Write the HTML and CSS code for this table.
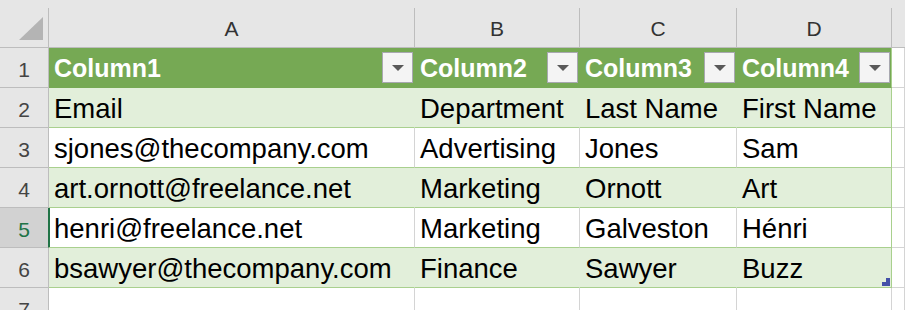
FILE: index.html
```
<!DOCTYPE html>
<html>
<head>
<meta charset="utf-8">
<link rel="stylesheet" href="styles.css">
</head>
<body>
<div class="top"></div>
<div class="sheet">
  <div class="corner"><svg width="24" height="23" viewBox="0 0 24 23"><polygon points="24,0 24,23 0,23" fill="#b4b4b4"/></svg></div>
  <div class="ch">A</div><div class="ch">B</div><div class="ch">C</div><div class="ch">D</div><div class="ch last"></div>

  <div class="rh">1</div>
  <div class="th"><span class="t">Column1</span><span class="dd"><svg width="12" height="6" viewBox="0 0 12 6"><polygon points="0,0 12,0 6,6" fill="#595959"/></svg></span></div>
  <div class="th"><span class="t">Column2</span><span class="dd"><svg width="12" height="6" viewBox="0 0 12 6"><polygon points="0,0 12,0 6,6" fill="#595959"/></svg></span></div>
  <div class="th"><span class="t">Column3</span><span class="dd"><svg width="12" height="6" viewBox="0 0 12 6"><polygon points="0,0 12,0 6,6" fill="#595959"/></svg></span></div>
  <div class="th end"><span class="t">Column4</span><span class="dd"><svg width="12" height="6" viewBox="0 0 12 6"><polygon points="0,0 12,0 6,6" fill="#595959"/></svg></span></div>
  <div class="out"></div>

  <div class="rh">2</div>
  <div class="c band">Email</div><div class="c band">Department</div><div class="c band">Last Name</div><div class="c band end">First Name</div><div class="out"></div>

  <div class="rh">3</div>
  <div class="c plain">sjones@thecompany.com</div><div class="c plain">Advertising</div><div class="c plain">Jones</div><div class="c plain end">Sam</div><div class="out"></div>

  <div class="rh">4</div>
  <div class="c band">art.ornott@freelance.net</div><div class="c band">Marketing</div><div class="c band">Ornott</div><div class="c band end">Art</div><div class="out"></div>

  <div class="rh active">5</div>
  <div class="c plain sel">henri@freelance.net</div><div class="c plain">Marketing</div><div class="c plain">Galveston</div><div class="c plain end">Hénri</div><div class="out"></div>

  <div class="rh">6</div>
  <div class="c band">bsawyer@thecompany.com</div><div class="c band">Finance</div><div class="c band">Sawyer</div><div class="c band end handle-cell">Buzz<svg class="handle" width="8" height="8" viewBox="0 0 8 8"><polygon points="4,0 8,0 8,8 0,8 0,4 4,4" fill="#4451a8"/></svg></div><div class="out"></div>

  <div class="rh">7</div>
  <div class="out"></div><div class="out"></div><div class="out"></div><div class="out"></div><div class="out"></div>
</div>
</body>
</html>
```
FILE: styles.css
```
html, body {
  margin: 0;
  padding: 0;
  background: #ffffff;
  overflow: hidden;
}
body {
  font-family: "Liberation Sans", Arial, sans-serif;
}
.top {
  height: 8px;
  background: #e6e6e6;
}
.sheet {
  display: grid;
  grid-template-columns: 49px 366px 165px 157px 155px 1fr;
  grid-auto-rows: 40px;
}
.sheet > div {
  box-sizing: border-box;
  border-right: 1px solid #d4d4d4;
  border-bottom: 1px solid #d4d4d4;
  min-width: 0;
  overflow: hidden;
  white-space: nowrap;
}
.corner {
  background: #e6e6e6;
  border-color: #bdbdbd !important;
  display: flex;
  justify-content: flex-end;
  align-items: flex-end;
  padding: 0 5px 7px 0;
}
.corner svg { display: block; }
.ch {
  background: #e6e6e6;
  border-color: #bdbdbd !important;
  text-align: center;
  font-size: 21px;
  color: #333333;
  padding-top: 3px;
  line-height: 36px;
}
.ch.last { border-right: none !important; }
.rh {
  background: #e6e6e6;
  border-color: #bdbdbd !important;
  text-align: center;
  font-size: 21px;
  color: #444444;
  padding-top: 5px;
  line-height: 34px;
}
.rh.active {
  background: #d2d2d2;
  color: #217346;
  border-right-color: #217346 !important;
}
.th {
  background: #76a954;
  border-right-color: #76a954 !important;
  border-bottom-color: #76a954 !important;
  color: #ffffff;
  font-weight: bold;
  font-size: 25px;
  display: flex;
  align-items: center;
  justify-content: space-between;
  padding: 0 1px 0 5px;
}
.th.end { border-right-color: #a9d08e !important; }
.th .t {
  padding-top: 2px;
  line-height: 37px;
}
.dd {
  width: 31px;
  height: 31px;
  box-sizing: border-box;
  border: 1px solid #a8a8b0;
  background: #f4f4f4;
  display: flex;
  align-items: center;
  justify-content: center;
  flex: none;
}
.dd svg { display: block; }
.c {
  font-size: 27.5px;
  color: #000000;
  padding: 2px 0 0 5px;
  line-height: 37px;
}
.band {
  background: #e2efda;
  border-right-color: #e2efda !important;
  border-bottom-color: #a9d08e !important;
}
.plain {
  background: #ffffff;
  border-bottom-color: #a9d08e !important;
}
.c.end { border-right-color: #a9d08e !important; }
.sel { box-shadow: inset 1px 0 0 #217346; }
.out { background: #ffffff; }
.handle-cell { position: relative; }
.handle {
  position: absolute;
  right: 1px;
  bottom: 1px;
  display: block;
}
```
